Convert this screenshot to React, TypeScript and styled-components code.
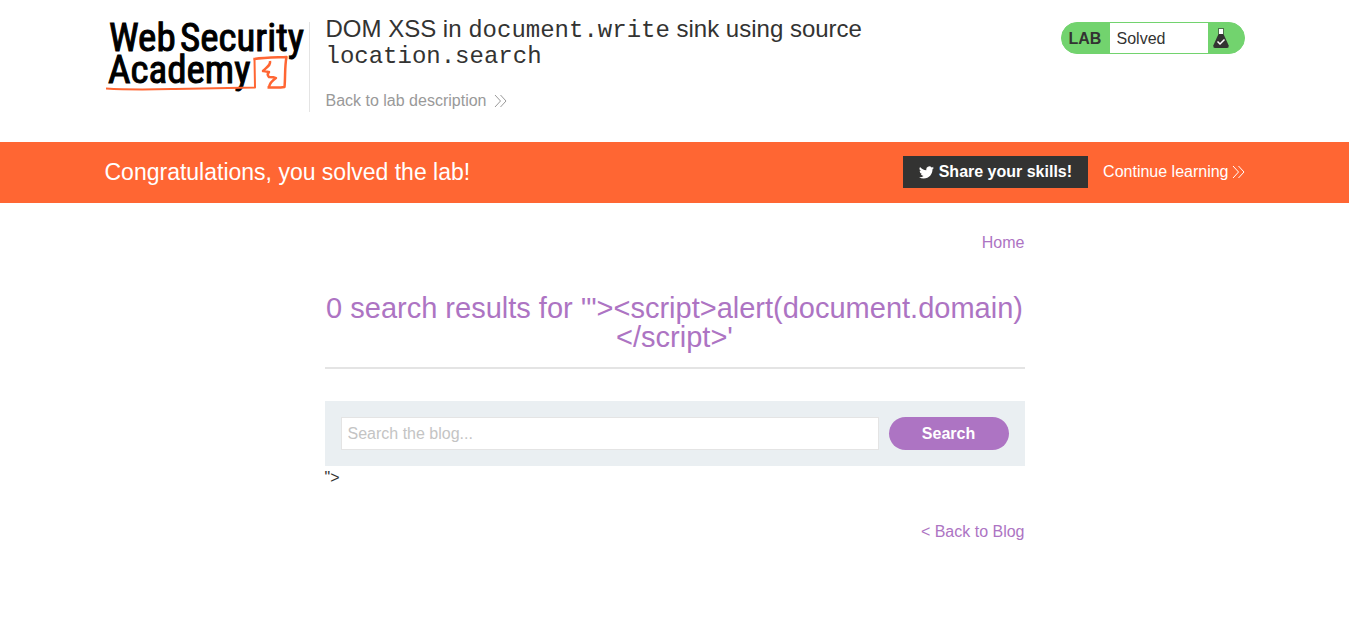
import React from "react";
import styled, { createGlobalStyle } from "styled-components";

const GlobalStyle = createGlobalStyle`
  *, *::before, *::after { box-sizing: border-box; }
  body {
    margin: 0;
    background: #fff;
    color: #333332;
    font-family: "Liberation Sans", Arial, sans-serif;
    font-size: 16px;
    line-height: 18px;
  }
`;

const Container = styled.div`
  max-width: 1140px;
  margin: 0 auto;
  display: flex;
`;

const Header = styled(Container)`
  padding: 16px 0 30px;
  align-items: flex-start;
`;

const LogoLink = styled.a`
  display: block;
  flex: none;
  height: 90px;
  margin-top: 6px;
  padding-right: 4px;
  border-right: 1px solid #e4e4e4;
`;

const LogoDrawing = styled.svg`
  display: block;
  overflow: visible;
`;

const LogoText = styled.text`
  font-family: "Roboto Condensed", "Liberation Sans Narrow", Roboto, sans-serif;
  font-size: 39px;
  fill: #000;
  stroke: #000;
  stroke-width: 1px;
`;

const TitleBlock = styled.div`
  flex: 1;
  max-width: 572px;
  padding-left: 16px;
`;

const Title = styled.h2`
  margin: 0 0 24px;
  font-size: 24px;
  line-height: 26px;
  font-weight: 400;
`;

const Code = styled.code`
  font-family: "Liberation Mono", "Courier New", monospace;
  font-size: 24px;
  line-height: 20px;
`;

const TextLink = styled.a<{ $color: string; $gap?: number }>`
  display: inline-flex;
  align-items: center;
  gap: ${(p) => p.$gap ?? 0}px;
  color: ${(p) => p.$color};
  text-decoration: none;
  white-space: nowrap;
`;

const LabStatus = styled.div`
  display: flex;
  align-items: stretch;
  width: 184px;
  height: 32px;
  margin: 6px 0 0 auto;
  border: 1px solid #72d36e;
  border-radius: 16px;
  background: #72d36e;
  line-height: 32px;
  overflow: hidden;
`;

const LabTag = styled.span`
  width: 48px;
  padding-left: 7px;
  font-weight: 700;
`;

const LabState = styled.span`
  width: 98px;
  padding-left: 7px;
  background: #fff;
`;

const FlaskIcon = styled.svg`
  margin: 5px 0 0 5px;
`;

const Banner = styled.section`
  background: #ff6633;
  color: #fff;
`;

const BannerInner = styled(Container)`
  padding: 14px 0 15px;
  align-items: center;
`;

const BannerText = styled.h4`
  flex: 1;
  margin: 0;
  font-size: 23px;
  line-height: 26px;
  font-weight: 400;
`;

const ShareButton = styled.button`
  display: flex;
  align-items: center;
  gap: 5px;
  height: 32px;
  margin-right: 15px;
  padding: 0 16px;
  border: 0;
  background: #333332;
  color: #fff;
  font: 700 16px "Liberation Sans", Arial, sans-serif;
`;

const Blog = styled.main`
  max-width: 700px;
  margin: 0 auto;
  padding: 31px 0;
`;

const LinkRow = styled.nav`
  display: flex;
  justify-content: flex-end;
`;

const ResultHeader = styled.header`
  margin: 42px 0 32px;
  padding-bottom: 15px;
  border-bottom: 2px solid #e4e4e4;
`;

const ResultTitle = styled.h1`
  margin: 0;
  color: #ad74c3;
  font-size: 29px;
  line-height: 29px;
  font-weight: 400;
  text-align: center;
`;

const SearchForm = styled.form`
  display: flex;
  gap: 10px;
  padding: 16px;
  background: #eaeff2;
`;

const SearchInput = styled.input`
  flex: 1;
  min-width: 0;
  height: 33px;
  padding: 0 6px;
  border: 1px solid #e4e4e4;
  background: #fff;
  font: 16px "Liberation Sans", Arial, sans-serif;
  &::placeholder { color: #c4c4c4; opacity: 1; }
`;

const SearchButton = styled.button`
  width: 120px;
  height: 33px;
  border: 0;
  border-radius: 17px;
  background: #ad74c3;
  color: #fff;
  font: 700 16px "Liberation Sans", Arial, sans-serif;
`;

const Leftover = styled.p`
  margin: 3px 0 36px;
`;

const Chevrons = () => (
  <svg width="13" height="14" viewBox="0 0 13 14" fill="none" stroke="currentColor" strokeWidth="1" aria-hidden="true">
    <path d="M1 1l5.5 6L1 13M6.500 1l5.500 6-5.500 6" />
  </svg>
);

const Logo = () => (
  <LogoDrawing width="200" height="74" viewBox="0 0 200 74" role="img" aria-label="Web Security Academy">
    <LogoText x="4" y="29">Web</LogoText>
    <LogoText x="75" y="29">Security</LogoText>
    <LogoText x="3" y="61">Academy</LogoText>
    <path d="M1 66.500C25 68 45 67.500 70 67S125 66 150 65.500L149.500 36.500" fill="none" stroke="#ff6633" strokeWidth="2" strokeLinejoin="round" />
    <path d="M148.500 37c11-1.500 21-1.500 33-2-2 10-1 20-2 30-5 1-11 .500-17 .500" fill="none" stroke="#ff6633" strokeWidth="2.500" strokeLinejoin="round" />
    <path d="M165 39c1 4-3 6-7 10 3 0 5 1 6 1-2 2-1 4 0 5 3 0 5 0 7 1-3 2-6 4-7 9" fill="none" stroke="#ff6633" strokeWidth="2.500" strokeLinejoin="round" />
  </LogoDrawing>
);

const App: React.FC = () => (
  <>
    <GlobalStyle />
    <Header as="header">
      <LogoLink href="#"><Logo /></LogoLink>
      <TitleBlock>
        <Title>
          DOM XSS in <Code>document.write</Code> sink using source <Code>location.search</Code>
        </Title>
        <TextLink href="#" $color="#999" $gap={8}>
          Back to lab description <Chevrons />
        </TextLink>
      </TitleBlock>
      <LabStatus>
        <LabTag>LAB</LabTag>
        <LabState>Solved</LabState>
        <FlaskIcon width="16" height="20" viewBox="0 0 16 20" aria-hidden="true">
          <path d="M6 1h4v5H6z" fill="#fff" />
          <path d="M5 .5h6M5.500 1v5M10.500 1v5" stroke="#333332" strokeOpacity=".6" />
          <path d="M5.500 6h5l5.200 11.500Q16 20 14 20H2Q0 20 .3 17.500z" fill="#333332" />
          <path d="M4.500 13.500l2.500 2.500 4.500-4.500" fill="none" stroke="#fff" strokeWidth="1.500" />
        </FlaskIcon>
      </LabStatus>
    </Header>
    <Banner>
      <BannerInner>
        <BannerText>Congratulations, you solved the lab!</BannerText>
        <ShareButton type="button">
          <svg width="15" height="13" viewBox="0 2 24 20" fill="currentColor" aria-hidden="true">
            <path d="M23.950 4.570a10 10 0 0 1-2.820.770 4.960 4.960 0 0 0 2.160-2.720c-.950.550-2 .950-3.130 1.180a4.920 4.920 0 0 0-8.380 4.480C7.690 8.100 4.070 6.130 1.640 3.160a4.920 4.920 0 0 0 1.520 6.570 4.900 4.900 0 0 1-2.230-.610v.060a4.920 4.920 0 0 0 3.950 4.830 5 5 0 0 1-2.210.080 4.940 4.940 0 0 0 4.600 3.420A9.870 9.870 0 0 1 0 19.540a13.990 13.990 0 0 0 7.550 2.210c9.050 0 14-7.500 14-13.990 0-.210 0-.420-.020-.630a9.940 9.940 0 0 0 2.420-2.560z" />
          </svg>
          Share your skills!
        </ShareButton>
        <TextLink href="#" $color="#fff" $gap={3}>
          Continue learning <Chevrons />
        </TextLink>
      </BannerInner>
    </Banner>
    <Blog>
      <LinkRow>
        <TextLink href="#" $color="#ad74c3">Home</TextLink>
      </LinkRow>
      <ResultHeader>
        <ResultTitle>{`0 search results for '"><script>alert(document.domain)</script>'`}</ResultTitle>
      </ResultHeader>
      <SearchForm onSubmit={(e) => e.preventDefault()}>
        <SearchInput type="text" name="search" placeholder="Search the blog..." aria-label="Search the blog" />
        <SearchButton type="submit">Search</SearchButton>
      </SearchForm>
      <Leftover>{'">'}</Leftover>
      <LinkRow>
        <TextLink href="#" $color="#ad74c3">{"< Back to Blog"}</TextLink>
      </LinkRow>
    </Blog>
  </>
);

export default App;
